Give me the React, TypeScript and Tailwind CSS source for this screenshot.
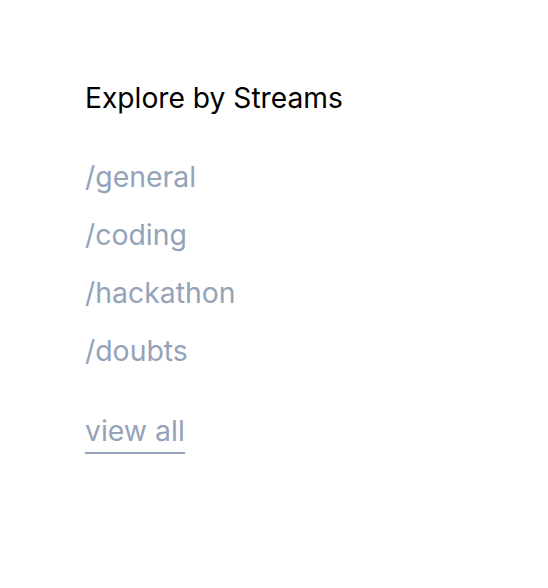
export default function App() {
  const streams = ['/general', '/coding', '/hackathon', '/doubts']

  return (
    <div className="w-[548px] h-[588px] bg-white pl-[85px] pt-[80px]" style={{ fontFamily: 'Inter, sans-serif' }}>
      <h2 className="text-[28.2px] leading-[36px] text-black">Explore by Streams</h2>
      <ul className="mt-[45px] flex flex-col gap-[26px]">
        {streams.map((s) => (
          <li key={s} className="text-[28.4px] leading-[32px] text-[#94a3b8]">
            {s}
          </li>
        ))}
      </ul>
      <a href="#" className="mt-[48px] inline-block text-[28.4px] leading-[32px] text-[#94a3b8] border-b-2 border-[#94a3b8] pb-[5px]">
        view all
      </a>
    </div>
  )
}
